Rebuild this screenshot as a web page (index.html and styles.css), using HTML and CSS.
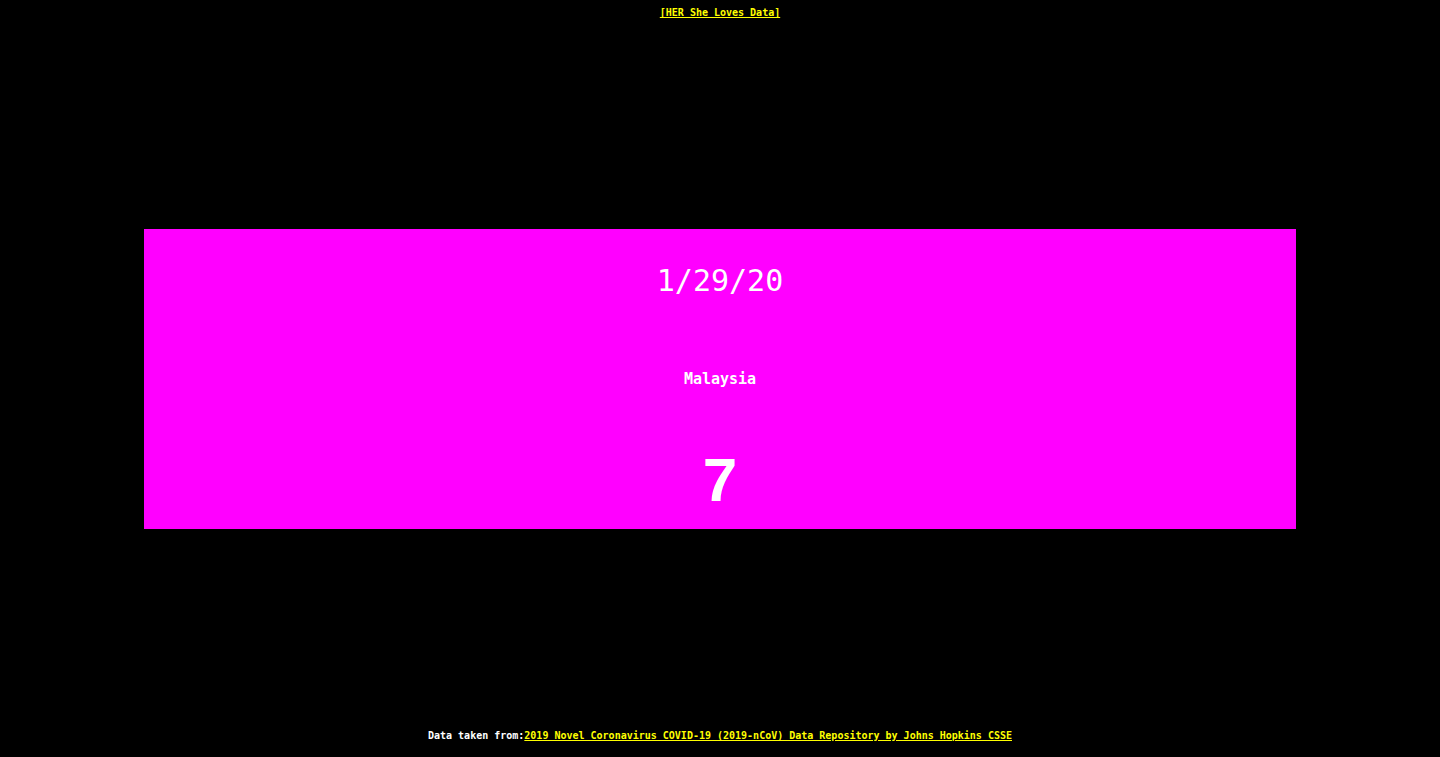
FILE: index.html
```html
<!DOCTYPE html>
<html lang="en">
<head>
<meta charset="utf-8">
<title>HER She Loves Data</title>
<link rel="stylesheet" href="styles.css">
</head>
<body>
<div class="page">
  <header class="top">
    <a class="link" href="#">[HER She Loves Data]</a>
  </header>
  <main class="stage">
    <section class="card">
      <div class="row date">1/29/20</div>
      <div class="row country">Malaysia</div>
      <div class="row count">7</div>
    </section>
  </main>
  <footer class="bottom">
    <span class="label">Data taken from:</span><a class="link" href="#">2019 Novel Coronavirus COVID-19 (2019-nCoV) Data Repository by Johns Hopkins CSSE</a>
  </footer>
</div>
</body>
</html>
```
FILE: styles.css
```css
html, body {
  margin: 0;
  padding: 0;
  background: #000;
}
body {
  font-family: "DejaVu Sans Mono", "Liberation Mono", monospace;
  color: #fff;
}
.page {
  height: 100vh;
  display: grid;
  grid-template-rows: 34px 1fr 34px;
}
.top, .bottom {
  font-size: 10px;
  line-height: 12px;
  font-weight: bold;
  text-align: center;
  padding-top: 7px;
  box-sizing: border-box;
}
.link {
  color: #ffff00;
  text-decoration: underline;
}
.label {
  color: #fff;
}
.stage {
  display: flex;
  align-items: center;
  justify-content: center;
}
.card {
  width: 80%;
  height: 300px;
  background: #ff00ff;
  display: grid;
  grid-template-rows: 100px 100px 100px;
}
.row {
  display: flex;
  align-items: center;
  justify-content: center;
  color: #fff;
}
.date {
  font-size: 30px;
  padding-top: 3px;
}
.country {
  font-size: 15px;
  font-weight: bold;
  padding-top: 1px;
}
.count {
  font-family: "Liberation Sans", Arial, sans-serif;
  font-size: 62px;
  font-weight: bold;
  padding-top: 2px;
}
```
